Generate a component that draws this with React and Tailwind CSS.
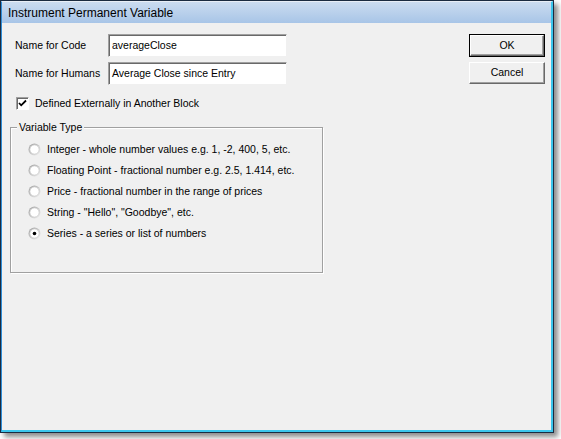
import React from 'react';

const font = { fontFamily: '"Liberation Sans", Arial, sans-serif' };

const Radio = ({ checked }) => (
    <svg width="13" height="13" viewBox="0 0 13 13" className="shrink-0">
        <defs>
            <linearGradient id="rg" x1="0" y1="0" x2="1" y2="1">
                <stop offset="0" stopColor="#9a9a9a" />
                <stop offset="1" stopColor="#f4f4f4" />
            </linearGradient>
        </defs>
        <circle cx="6.5" cy="6.5" r="6" fill="url(#rg)" />
        <circle cx="6.5" cy="6.5" r="4.6" fill="#ffffff" stroke="#d0d0d0" strokeWidth="0.8" />
        {checked && <circle cx="6.5" cy="6.5" r="1.8" fill="#000000" />}
    </svg>
);

const Field = ({ label, value }) => (
    <div className="flex items-center h-[23px]">
        <span className="w-[93px] ml-[5px] text-[10.5px] text-black">{label}</span>
        <div className="w-[179px] h-[23px] bg-white border border-t-[#a0a0a0] border-l-[#a0a0a0] border-r-[#f0f0f0] border-b-[#f0f0f0] shadow-[inset_1px_1px_0_#696969] flex items-center pl-[3px] text-[10.5px] text-black">
            {value}
        </div>
    </div>
);

const Button = ({ label, isDefault }) => (
    <div className={isDefault ? 'border border-black' : ''}>
        <div className={`flex items-center justify-center bg-[#f0f0f0] border border-t-white border-l-white border-r-[#696969] border-b-[#696969] shadow-[inset_-1px_-1px_0_#a0a0a0] text-[10.5px] text-black ${isDefault ? 'w-[74px] h-[21px]' : 'w-[76px] h-[22px]'}`}>
            {label}
        </div>
    </div>
);

const types = [
    'Integer - whole number values e.g. 1, -2, 400, 5, etc.',
    'Floating Point - fractional number e.g. 2.5, 1.414, etc.',
    'Price - fractional number in the range of prices',
    'String - "Hello", "Goodbye", etc.',
    'Series - a series or list of numbers',
];

const App = () => {
    return (
        <div className="w-[561px] h-[439px] bg-white" style={font}>
            <div className="w-[554px] h-[433px] border border-[#1b2b40] shadow-[4px_4px_5px_rgba(0,0,0,0.45)] flex flex-col">
                <div className="flex-1 flex flex-col border-l border-t border-l-[#2f8ed8] border-t-[#e8eef6] border-r-2 border-b-2 border-r-[#3cc6ec] border-b-[#3cc6ec]">
                    <div className="h-[21px] bg-gradient-to-b from-[#cbdcf0] to-[#a8c5e7] flex items-center pl-[6px] text-[12px] text-black">
                        Instrument Permanent Variable
                    </div>
                    <div className="flex-1 bg-[#f0f0f0] flex pl-[8px] pt-[11px] pr-[5px]">
                        <div className="flex flex-col">
                            <Field label="Name for Code" value="averageClose" />
                            <div className="h-[5px]" />
                            <Field label="Name for Humans" value="Average Close since Entry" />
                            <div className="flex items-center mt-[12px] ml-[6px] h-[13px]">
                                <div className="w-[13px] h-[13px] bg-white border border-t-[#a0a0a0] border-l-[#a0a0a0] border-r-white border-b-white shadow-[inset_1px_1px_0_#696969] flex items-center justify-center">
                                    <svg width="9" height="9" viewBox="0 0 9 9">
                                        <path d="M1 4 L3.2 6.3 L8 1.5" fill="none" stroke="#000" strokeWidth="1.8" />
                                    </svg>
                                </div>
                                <span className="ml-[6px] text-[10.5px] text-black">Defined Externally in Another Block</span>
                            </div>
                            <div className="relative mt-[17px] w-[313px] h-[146px] border border-[#a0a0a0] shadow-[1px_1px_0_#ffffff,inset_1px_1px_0_#ffffff]">
                                <span className="absolute -top-[8px] left-[6px] px-[2px] bg-[#f0f0f0] text-[10.5px] text-black leading-[14px]">Variable Type</span>
                                <div className="flex flex-col pt-[15px] pl-[17px] gap-[8px]">
                                    {types.map((t, i) => (
                                        <div key={i} className="flex items-center h-[13px]">
                                            <Radio checked={i === 4} />
                                            <span className="ml-[6px] text-[10.5px] text-black">{t}</span>
                                        </div>
                                    ))}
                                </div>
                            </div>
                        </div>
                        <div className="ml-auto mr-[1px] flex flex-col gap-[5px]">
                            <Button label="OK" isDefault />
                            <Button label="Cancel" />
                        </div>
                    </div>
                </div>
            </div>
        </div>
    );
};

export default App;
